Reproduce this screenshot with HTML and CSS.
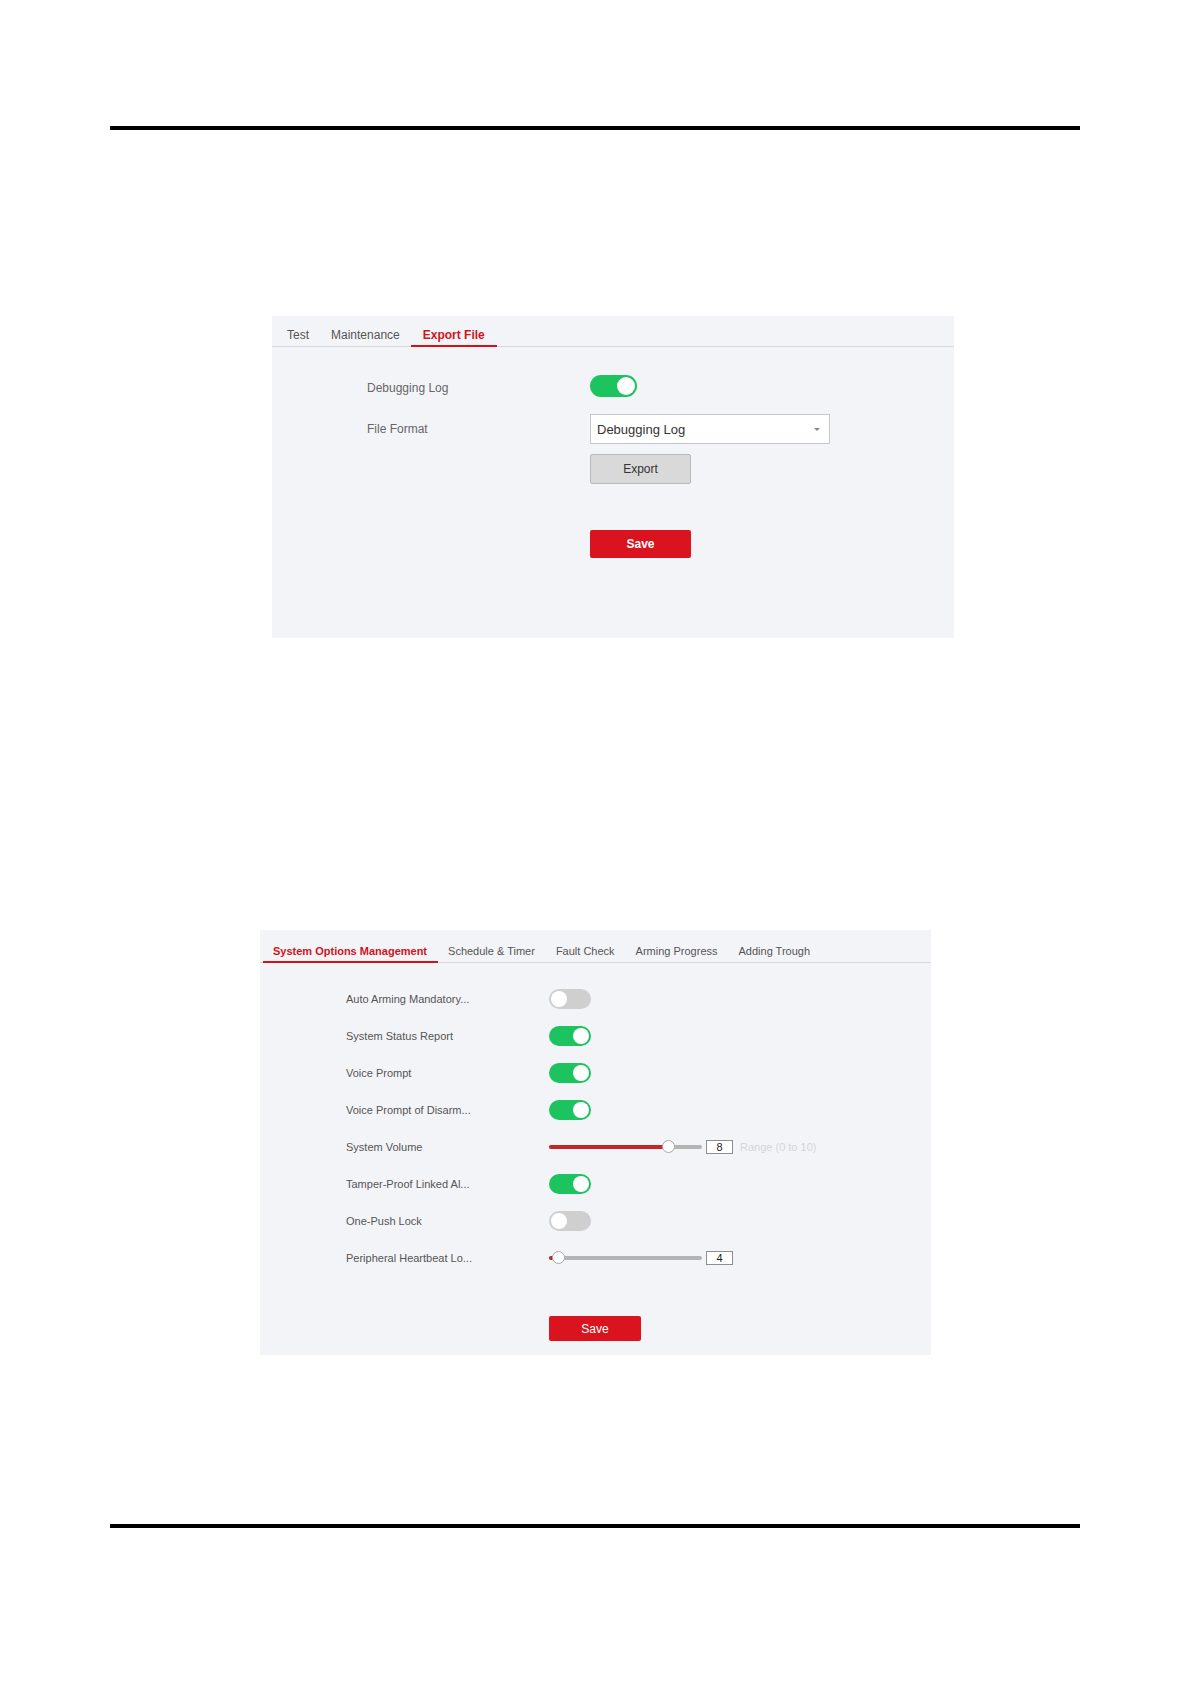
FILE: index.html
```html
<!DOCTYPE html>
<html lang="en">
<head>
  <meta charset="UTF-8">
  <meta name="viewport" content="width=device-width, initial-scale=1.0">
  <title>Export File / System Options</title>
  <link rel="stylesheet" href="styles.css">
</head>
<body>
  <div class="page">
    <div class="rule rule-top"></div>

    <section class="panel panel-export">
      <div class="tabs">
        <span class="tab">Test</span>
        <span class="tab">Maintenance</span>
        <span class="tab active">Export File</span>
      </div>
      <div class="export-form">
        <div class="field field-log">
          <span class="label">Debugging Log</span>
          <span class="switch on"><span class="knob"></span></span>
        </div>
        <div class="field field-format">
          <span class="label">File Format</span>
          <div class="select">
            <span>Debugging Log</span>
            <span class="caret"></span>
          </div>
        </div>
        <div class="field field-export">
          <span class="label"></span>
          <button class="btn btn-gray">Export</button>
        </div>
        <div class="field field-save">
          <span class="label"></span>
          <button class="btn btn-save">Save</button>
        </div>
      </div>
    </section>

    <section class="panel panel-system">
      <div class="tabs">
        <span class="tab active">System Options Management</span>
        <span class="tab">Schedule &amp; Timer</span>
        <span class="tab">Fault Check</span>
        <span class="tab">Arming Progress</span>
        <span class="tab">Adding Trough</span>
      </div>
      <div class="system-form">
        <div class="row">
          <span class="label">Auto Arming Mandatory...</span>
          <span class="switch small"><span class="knob"></span></span>
        </div>
        <div class="row">
          <span class="label">System Status Report</span>
          <span class="switch small on"><span class="knob"></span></span>
        </div>
        <div class="row">
          <span class="label">Voice Prompt</span>
          <span class="switch small on"><span class="knob"></span></span>
        </div>
        <div class="row">
          <span class="label">Voice Prompt of Disarm...</span>
          <span class="switch small on"><span class="knob"></span></span>
        </div>
        <div class="row">
          <span class="label">System Volume</span>
          <div class="slider">
            <div class="track">
              <div class="fill" style="width: 119px"></div>
              <div class="thumb" style="left: 113px"></div>
            </div>
            <span class="num">8</span>
            <span class="hint">Range (0 to 10)</span>
          </div>
        </div>
        <div class="row">
          <span class="label">Tamper-Proof Linked Al...</span>
          <span class="switch small on"><span class="knob"></span></span>
        </div>
        <div class="row">
          <span class="label">One-Push Lock</span>
          <span class="switch small"><span class="knob"></span></span>
        </div>
        <div class="row">
          <span class="label">Peripheral Heartbeat Lo...</span>
          <div class="slider">
            <div class="track">
              <div class="fill" style="width: 5px"></div>
              <div class="thumb" style="left: 3px"></div>
            </div>
            <span class="num">4</span>
          </div>
        </div>
        <div class="save-row">
          <button class="btn btn-save small">Save</button>
        </div>
      </div>
    </section>

    <div class="rule rule-bottom"></div>
  </div>
</body>
</html>
```

FILE: styles.css
```css
body {
  margin: 0;
  background: #fff;
  font-family: "Liberation Sans", Arial, sans-serif;
  color: #555;
}
.page {
  width: 1191px;
  height: 1684px;
  padding-top: 126px;
  box-sizing: border-box;
}
.rule {
  width: 970px;
  height: 4px;
  margin-left: 110px;
  background: #000;
}
.rule-bottom {
  margin-top: 169px;
}
.panel {
  background: #f3f4f8;
  box-sizing: border-box;
}
.panel-export {
  width: 682px;
  height: 322px;
  margin: 186px 0 0 272px;
}
.panel-system {
  width: 671px;
  height: 425px;
  margin: 292px 0 0 260px;
}

/* tabs */
.tabs {
  display: flex;
  border-bottom: 1px solid #d8d9dc;
}
.tab {
  line-height: 14px;
  border-bottom: 2px solid transparent;
  margin-bottom: -1px;
  color: #555;
  white-space: nowrap;
}
.tab.active {
  color: #d3121b;
  font-weight: bold;
  border-bottom-color: #d3121b;
}
.panel-export .tabs {
  padding-left: 4px;
}
.panel-export .tab {
  font-size: 12px;
  padding: 12px 11px 3px;
}
.panel-export .tab.active {
  padding: 12px 12px 3px;
}
.panel-system .tabs {
  padding-left: 3px;
}
.panel-system .tab {
  font-size: 11px;
  padding: 14px 11px 3px 10px;
}

/* export form */
.export-form {
  padding: 28px 0 0 95px;
}
.field {
  display: flex;
  align-items: center;
}
.field .label {
  width: 223px;
  font-size: 12px;
  color: #666;
}
.field-log .label {
  padding-top: 3px;
}
.field-format {
  margin-top: 17px;
}
.field-export {
  margin-top: 10px;
}
.field-save {
  margin-top: 46px;
}
.select {
  width: 240px;
  height: 30px;
  box-sizing: border-box;
  border: 1px solid #c6c7ca;
  background: #fff;
  display: flex;
  align-items: center;
  justify-content: space-between;
  padding: 0 9px 0 6px;
  font-size: 13px;
  color: #333;
}
.caret {
  width: 0;
  height: 0;
  border-left: 3px solid transparent;
  border-right: 3px solid transparent;
  border-top: 3px solid #888;
}
.btn {
  font-family: inherit;
  font-size: 12px;
  border-radius: 2px;
  padding: 0;
  box-sizing: border-box;
}
.btn-gray {
  width: 101px;
  height: 30px;
  background: #d9d9d9;
  border: 1px solid #b9b9b9;
  color: #333;
}
.btn-save {
  width: 101px;
  height: 28px;
  background: #d9141e;
  border: none;
  color: #fff;
  font-weight: bold;
}
.btn-save.small {
  width: 92px;
  height: 25px;
  font-weight: normal;
}

/* switches */
.switch {
  display: flex;
  align-items: center;
  justify-content: flex-start;
  width: 47px;
  height: 22px;
  padding: 0 2px;
  box-sizing: border-box;
  border-radius: 11px;
  background: #cfcfcf;
}
.switch.on {
  justify-content: flex-end;
  background: #1dc35e;
}
.knob {
  width: 18px;
  height: 18px;
  border-radius: 50%;
  background: #fff;
}
.switch.small {
  width: 42px;
  height: 20px;
  border-radius: 10px;
}
.switch.small .knob {
  width: 16px;
  height: 16px;
}

/* system form */
.system-form {
  padding: 17px 0 0 86px;
}
.row {
  display: flex;
  align-items: center;
  height: 37px;
}
.row .label {
  width: 203px;
  font-size: 11px;
  color: #555;
  white-space: nowrap;
}
.slider {
  display: flex;
  align-items: center;
}
.track {
  position: relative;
  width: 153px;
  height: 4px;
  border-radius: 2px;
  background: #b4b4b4;
}
.fill {
  height: 4px;
  border-radius: 2px;
  background: #c1272d;
}
.thumb {
  position: absolute;
  top: -5px;
  width: 13px;
  height: 13px;
  box-sizing: border-box;
  border: 1px solid #a8a8a8;
  border-radius: 50%;
  background: #fff;
}
.num {
  width: 27px;
  height: 14px;
  margin-left: 4px;
  box-sizing: border-box;
  border: 1px solid #8e8e8e;
  background: #fff;
  font-size: 11px;
  line-height: 12px;
  text-align: center;
  color: #222;
}
.hint {
  margin-left: 7px;
  font-size: 11px;
  color: #d4d4d6;
}
.save-row {
  margin-top: 40px;
  padding-left: 203px;
}
```
